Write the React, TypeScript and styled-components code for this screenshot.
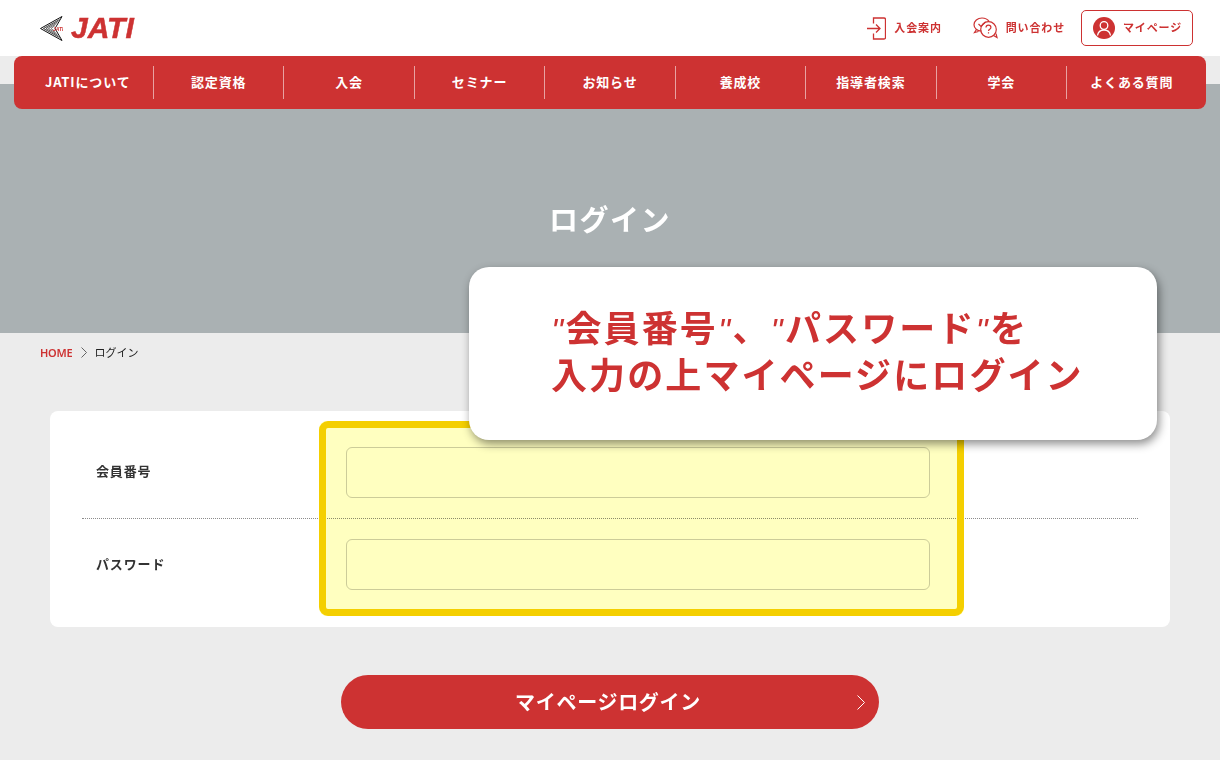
import styled, { createGlobalStyle } from "styled-components";

const RED = "#cd3232";
const JP = `"Noto Sans CJK JP", "Noto Sans", sans-serif`;

const NAV_ITEMS = [
  "JATIについて",
  "認定資格",
  "入会",
  "セミナー",
  "お知らせ",
  "養成校",
  "指導者検索",
  "学会",
  "よくある質問",
];

const Global = createGlobalStyle`
  html, body {
    margin: 0;
    height: 760px;
    overflow: hidden;
    background: #ececec;
    font-family: ${JP};
  }
  * { box-sizing: border-box; }
`;

const Page = styled.div`
  position: relative;
  width: 1220px;
  height: 760px;
  overflow: hidden;
`;

const Header = styled.header`
  display: flex;
  justify-content: space-between;
  align-items: center;
  height: 56px;
  padding: 0 27px 0 40px;
  background: #fff;
`;

const Logo = styled.div`
  display: flex;
  align-items: center;
  gap: 8px;
`;

const LogoText = styled.span`
  font: italic bold 30px "Liberation Sans", sans-serif;
  -webkit-text-stroke: 0.5px ${RED};
  color: ${RED};
`;

const HeaderLinks = styled.div`
  display: flex;
  align-items: center;
`;

const HeaderLink = styled.a<{ $gap: number; $mr: number }>`
  display: flex;
  align-items: center;
  gap: ${(p) => p.$gap}px;
  margin-right: ${(p) => p.$mr}px;
  color: ${RED};
`;

const HeaderLabel = styled.span`
  margin-bottom: 2px;
  font-size: 11px;
  font-weight: 700;
  letter-spacing: 0.85px;
`;

const MyPageButton = styled.a`
  display: flex;
  align-items: center;
  gap: 8px;
  width: 112px;
  height: 36px;
  padding-left: 11px;
  border: 1px solid ${RED};
  border-radius: 5px;
  color: ${RED};
`;

const Nav = styled.nav`
  position: relative;
  z-index: 1;
  display: grid;
  grid-template-columns: repeat(9, 1fr);
  align-items: center;
  height: 53px;
  margin: 0 14px -25px;
  padding: 0 9.5px 0 8.5px;
  background: ${RED};
  border-radius: 8px;
`;

const NavItem = styled.a`
  display: flex;
  align-items: center;
  justify-content: center;
  height: 33px;
  padding-bottom: 3px;
  font-size: 13px;
  font-weight: 700;
  letter-spacing: 0.85px;
  color: #fff;

  & + & {
    border-left: 1px solid rgba(255, 255, 255, 0.55);
  }
`;

const Hero = styled.section`
  display: flex;
  align-items: center;
  justify-content: center;
  height: 249px;
  padding-top: 19px;
  background: #aab1b3;
`;

const HeroTitle = styled.h1`
  margin: 0;
  font-size: 29px;
  font-weight: 700;
  letter-spacing: 1.5px;
  color: #fff;
`;

const Breadcrumb = styled.div`
  display: flex;
  align-items: center;
  gap: 7px;
  height: 40px;
  padding: 0 0 2px 40px;
  font-size: 11px;
  color: #222;
`;

const HomeLink = styled.a`
  font-family: "Noto Sans", sans-serif;
  font-weight: 600;
  letter-spacing: -0.2px;
  color: ${RED};
`;

const FormCard = styled.form`
  width: 1120px;
  height: 216px;
  margin: 38px auto 48px;
  padding: 15px 32px 14px;
  background: #fff;
  border-radius: 8px;
`;

const FormRow = styled.div`
  display: flex;
  align-items: center;
  height: 92px;
  padding-left: 14px;

  & + & {
    border-top: 1px dotted #8c8c8c;
  }
`;

const FieldLabel = styled.label`
  width: 250px;
  padding-bottom: 3px;
  font-size: 13px;
  font-weight: 700;
  letter-spacing: 0.85px;
  color: #333;
`;

const Field = styled.input`
  width: 584px;
  height: 51px;
  background: #fff;
  border: 1px solid #ccc;
  border-radius: 6px;
`;

const SubmitButton = styled.button`
  position: relative;
  display: block;
  width: 538px;
  height: 54px;
  margin: 0 auto;
  padding: 0 4px 2px 0;
  border: 0;
  border-radius: 27px;
  background: ${RED};
  font-family: ${JP};
  font-size: 20px;
  font-weight: 700;
  letter-spacing: 0.7px;
  color: #fff;

  svg {
    position: absolute;
    right: 13px;
    top: 20px;
  }
`;

const Highlight = styled.div`
  position: absolute;
  left: 319px;
  top: 421px;
  width: 645px;
  height: 195px;
  background: #ffffc0;
  mix-blend-mode: multiply;
  border-radius: 8px;
`;

const HighlightBorder = styled.div`
  position: absolute;
  left: 319px;
  top: 421px;
  width: 645px;
  height: 195px;
  border: 7px solid #f4cf00;
  border-radius: 9px;
`;

const Callout = styled.div`
  position: absolute;
  left: 469px;
  top: 267px;
  width: 688px;
  height: 173px;
  padding: 36px 0 0 82px;
  background: #fff;
  border-radius: 20px;
  box-shadow: 2px 4px 10px rgba(0, 0, 0, 0.45);
  font-size: 36px;
  font-weight: 700;
  line-height: 47px;
  letter-spacing: 2.1px;
  color: ${RED};
  white-space: nowrap;
`;

const Quote = styled.span`
  display: inline-block;
  width: 14.5px;
  font: italic 400 34px/1 "Liberation Sans", sans-serif;
  letter-spacing: 0;
  text-align: left;
`;

const App = () => (
  <Page>
    <Global />
    <Header>
      <Logo>
        <svg width="23" height="25" viewBox="0 0 23 25" fill="none">
          <path d="M22 .5L.5 12.5 22 24.500 15 12.500Z" stroke="#111" strokeWidth="1" />
          <path d="M19.500 3.500L3.500 12.500 19.500 21.500" stroke="#111" strokeWidth=".8" />
          <path d="M18 5.500L6 12.500 18 19.500" stroke="#333" strokeWidth=".8" />
          <path d="M16.500 7.500L8.500 12.500 16.500 17.500" stroke="#444" strokeWidth=".8" />
          <path d="M15 9.500L11 12.500 15 15.500" stroke="#555" strokeWidth=".8" />
          <text x="13" y="14.500" fontSize="5" fontStyle="italic" fontWeight="700" fontFamily="Liberation Sans" fill={RED}>JATI</text>
        </svg>
        <LogoText>JATI</LogoText>
      </Logo>
      <HeaderLinks>
        <HeaderLink $gap={8} $mr={31}>
          <svg width="19" height="23" viewBox="0 0 19 23" fill="none" stroke={RED} strokeWidth="1.300">
            <path d="M6.500 6.500V1h10.500A1.500 1.500 0 0 1 18.500 2.500v18A1.500 1.500 0 0 1 17 22H6.500v-5.500" />
            <path d="M0 11.500h13M9 7.500l4 4-4 4" />
          </svg>
          <HeaderLabel>入会案内</HeaderLabel>
        </HeaderLink>
        <HeaderLink $gap={8} $mr={16}>
          <svg width="25" height="22" viewBox="0 0 25 22" fill="none" stroke={RED} strokeWidth="1.200">
            <path d="M8.500 14.200C4.300 14 1 11.200 1 7.700 1 4 4.500 1 9 1c3 0 5.600 1.300 7 3.400" />
            <path d="M3.500 12.500L1.500 15.500l4-1" />
            <path d="M5.500 7l2.500 2.500L12.500 5" />
            <circle cx="15.500" cy="12.500" r="7.800" />
            <path d="M20.500 18.500l3.500 2-1-3.800" />
            <path d="M13 10.500c0-1.500 1.200-2.300 2.500-2.300s2.400.9 2.400 2.200c0 1.800-2.400 2-2.400 3.600M15.500 15.200v1.300" />
          </svg>
          <HeaderLabel>問い合わせ</HeaderLabel>
        </HeaderLink>
        <MyPageButton>
          <svg width="22" height="22" viewBox="0 0 22 22">
            <circle cx="11" cy="11" r="11" fill={RED} />
            <circle cx="11" cy="8.500" r="3.800" fill="none" stroke="#fff" strokeWidth="1.300" />
            <path d="M4.500 18.500c.6-3.700 3-5.500 6.500-5.500s5.900 1.800 6.500 5.500" fill="none" stroke="#fff" strokeWidth="1.300" />
          </svg>
          <HeaderLabel>マイページ</HeaderLabel>
        </MyPageButton>
      </HeaderLinks>
    </Header>
    <Nav>
      {NAV_ITEMS.map((item) => (
        <NavItem key={item}>{item}</NavItem>
      ))}
    </Nav>
    <Hero>
      <HeroTitle>ログイン</HeroTitle>
    </Hero>
    <Breadcrumb>
      <HomeLink>HOME</HomeLink>
      <svg width="8" height="11" viewBox="0 0 8 11" fill="none" stroke="#555" strokeWidth="0.9">
        <path d="M1.500 0.500l5 5-5 5" />
      </svg>
      ログイン
    </Breadcrumb>
    <FormCard>
      <FormRow>
        <FieldLabel>会員番号</FieldLabel>
        <Field />
      </FormRow>
      <FormRow>
        <FieldLabel>パスワード</FieldLabel>
        <Field type="password" />
      </FormRow>
    </FormCard>
    <SubmitButton type="button">
      マイページログイン
      <svg width="10" height="15" viewBox="0 0 10 15" fill="none" stroke="#fff" strokeWidth="1">
        <path d="M1.500 0.500l7 7-7 7" />
      </svg>
    </SubmitButton>
    <Highlight />
    <HighlightBorder />
    <Callout>
      <Quote>"</Quote>会員番号<Quote>"</Quote>、<Quote>"</Quote>パスワード<Quote>"</Quote>を
      <br />
      入力の上マイページにログイン
    </Callout>
  </Page>
);

export default App;
